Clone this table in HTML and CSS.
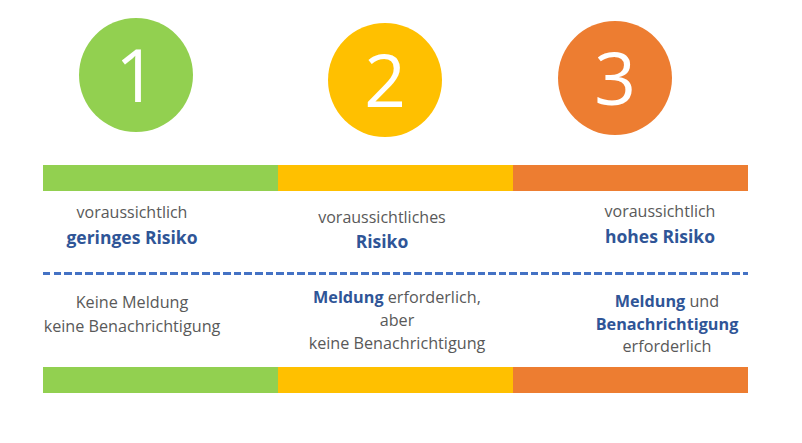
FILE: index.html
```html
<!DOCTYPE html>
<html lang="de">
<head>
<meta charset="utf-8">
<title>Risikostufen</title>
<link rel="stylesheet" href="styles.css">
</head>
<body>
<div class="page">
  <div class="circles">
    <div class="circle circle-1">1</div>
    <div class="circle circle-2">2</div>
    <div class="circle circle-3">3</div>
  </div>
  <div class="bar">
    <div class="seg green"></div>
    <div class="seg yellow"></div>
    <div class="seg orange"></div>
  </div>
  <div class="row top-row">
    <div class="cell t1">voraussichtlich<br><b>geringes Risiko</b></div>
    <div class="cell t2">voraussichtliches<br><b>Risiko</b></div>
    <div class="cell t3">voraussichtlich<br><b>hohes Risiko</b></div>
  </div>
  <div class="dash"></div>
  <div class="row bottom-row">
    <div class="cell b1">Keine Meldung<br>keine Benachrichtigung</div>
    <div class="cell b2"><b>Meldung</b> erforderlich,<br>aber<br>keine Benachrichtigung</div>
    <div class="cell b3"><b>Meldung</b> und<br><b>Benachrichtigung</b><br>erforderlich</div>
  </div>
  <div class="bar">
    <div class="seg green"></div>
    <div class="seg yellow"></div>
    <div class="seg orange"></div>
  </div>
</div>
</body>
</html>
```

FILE: styles.css
```css
html, body {
  margin: 0;
  padding: 0;
  background: #ffffff;
}

body {
  font-family: "Open Sans", "Liberation Sans", sans-serif;
  color: #595959;
}

.page {
  width: 705px;
  margin-left: 43px;
}

.circles {
  display: flex;
  height: 165px;
  align-items: flex-start;
}

.circle {
  width: 114px;
  height: 114px;
  border-radius: 50%;
  color: #ffffff;
  font-size: 73px;
  line-height: 1;
  display: flex;
  align-items: center;
  justify-content: center;
  padding-bottom: 4px;
  box-sizing: border-box;
}

.circle-1 { background: #92d050; margin: 18px 0 0 36px; }
.circle-2 { background: #ffc000; margin: 23px 0 0 135px; }
.circle-3 { background: #ed7d31; margin: 21px 0 0 116px; }

.bar {
  display: flex;
  height: 26px;
}

.seg { flex: 1; }
.green { background: #92d050; }
.yellow { background: #ffc000; }
.orange { background: #ed7d31; }

.row {
  display: grid;
  grid-template-columns: repeat(3, 1fr);
  text-align: center;
  font-size: 16px;
}

.row b {
  color: #2f5597;
  font-weight: 700;
}

.top-row { height: 81px; line-height: 25px; }
.top-row b { font-size: 17.5px; }
.bottom-row { height: 92px; line-height: 23px; font-size: 16.2px; }

.t1 { padding: 9px 57px 0 0; }
.t2 { padding: 14px 27px 0 0; line-height: 24px; }
.t3 { padding: 8px 0 0 59px; }

.b1 { padding: 15px 57px 0 0; line-height: 24px; }
.b2 { padding: 11px 0 0 3px; }
.b3 { padding: 15px 0 0 73px; line-height: 22.5px; }

.dash {
  height: 3px;
  background: repeating-linear-gradient(to right, #4472c4 0 7.5px, transparent 7.5px 10.6px);
}
```
